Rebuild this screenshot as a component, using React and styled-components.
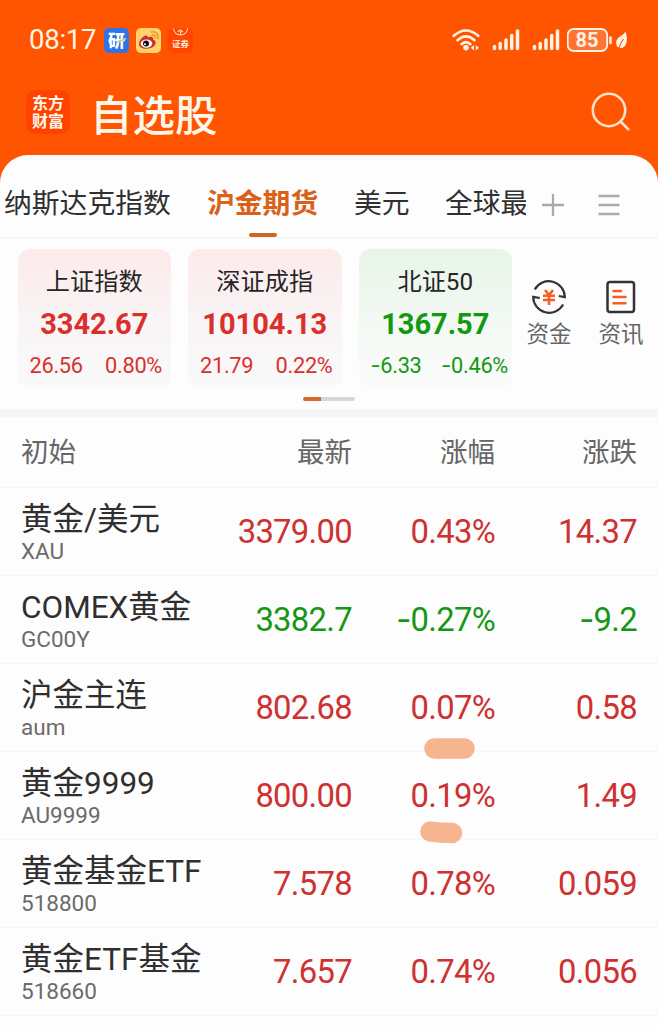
import React from "react";
import styled, { createGlobalStyle } from "styled-components";

const Global = createGlobalStyle`
  * { box-sizing: border-box; }
  body { margin: 0; background: #fdfdfd; font-family: Roboto, "Noto Sans CJK SC", sans-serif; color: #2f2f2f; }
`;

const Screen = styled.main`
  width: 658px;
  height: 1026px;
  overflow: hidden;
  background: #ff5500;
`;

const StatusBar = styled.div`
  height: 80px;
  padding: 0 29px;
  display: flex;
  align-items: center;
  justify-content: space-between;
  color: #fff3e6;
`;

const StatusGroup = styled.div`
  display: flex;
  align-items: center;
  gap: ${(p) => p.$gap}px;
`;

const Clock = styled.span`
  width: 67px;
  margin-right: 1px;
  font-size: 27.6px;
  letter-spacing: -0.3px;
  line-height: 38px;
  white-space: nowrap;
`;

const TitleBar = styled.header`
  height: 75px;
  padding: 0 27px 0 26px;
  display: flex;
  align-items: center;
  color: #fff6ea;
`;

const BrandLogo = styled.div`
  width: 44px;
  height: 44px;
  margin-top: -11px;
  padding-top: 2px;
  border-radius: 10px;
  background: #ff4200;
  display: grid;
  place-content: center;
  text-align: center;
  font-size: 16px;
  font-weight: 700;
  line-height: 18px;
`;

const Title = styled.h1`
  flex: 1;
  margin: -2px 0 0 20px;
  font-size: 42.5px;
  font-weight: 500;
  line-height: 60px;
`;

const Sheet = styled.section`
  height: 871px;
  border-radius: 28px 28px 0 0;
  background: #fdfdfd;
  overflow: hidden;
`;

const Tabs = styled.nav`
  height: 83px;
  padding: 0 4px;
  display: flex;
  border-bottom: 1px solid #f2f2f2;
`;

const Tab = styled.div`
  flex: none;
  width: ${(p) => p.$width}px;
  margin-right: ${(p) => p.$gap}px;
  padding-top: 28px;
  display: flex;
  flex-direction: column;
  align-items: center;
  justify-content: space-between;
  font-size: 27.8px;
  line-height: 42px;
  white-space: nowrap;
  overflow: hidden;
  font-weight: ${(p) => (p.$active ? 700 : 400)};
  color: ${(p) => (p.$active ? "#d9611a" : "#303030")};
  &::after {
    content: "";
    width: 28px;
    height: 4px;
    border-radius: 2px;
    background: ${(p) => (p.$active ? "#cf6526" : "transparent")};
  }
`;

const TabLabel = styled.span`
  width: 100%;
`;

const TabTools = styled.div`
  display: flex;
  gap: 32px;
  padding: 38px 0 0 0;
`;

const Overview = styled.div`
  height: 171px;
  padding: 11px 0 0 17.5px;
`;

const OverviewRow = styled.div`
  display: flex;
`;

const IndexCard = styled.div`
  width: 153.5px;
  height: 139px;
  margin-right: 17px;
  padding-top: 15px;
  border-radius: 12px;
  text-align: center;
  color: ${(p) => (p.$down ? "#119911" : "#d9302c")};
  background: ${(p) =>
    p.$down
      ? "linear-gradient(#e7f5e8, #f4f9f4 55%, #fafbfa)"
      : "linear-gradient(#fdeaea, #f9f5f6 55%, #f9f9fa)"};
`;

const IndexName = styled.div`
  color: #262626;
  font-size: 24.2px;
  line-height: 36px;
`;

const IndexValue = styled.div`
  margin-top: 4px;
  font-size: 29px;
  font-weight: 700;
  line-height: 40px;
`;

const IndexChange = styled.div`
  margin-top: 6px;
  padding-left: 12px;
  padding-right: ${(p) => (p.$down ? 4 : 9)}px;
  display: flex;
  justify-content: space-between;
  font-size: 21.8px;
  letter-spacing: -0.3px;
  line-height: 32px;
  white-space: nowrap;
`;

const Shortcut = styled.div`
  width: 46px;
  margin: 30px 26px 0 -3px;
  display: flex;
  flex-direction: column;
  align-items: center;
  gap: 3px;
  flex: none;
  font-size: 22.5px;
  line-height: 32px;
  color: #666;
  & + & { margin-left: 0; margin-right: 0; }
`;

const Pager = styled.div`
  width: 52px;
  height: 4px;
  margin: 9px 0 0 285.5px;
  border-radius: 2px;
  background: linear-gradient(to right, #d26a2c 18px, #d5d7da 18px);
`;

const Divider = styled.div`
  height: 8px;
  background: #f4f6f8;
`;

const Row = styled.div`
  height: ${(p) => (p.$head ? 71 : 88)}px;
  padding: 0 21px;
  display: grid;
  grid-template-columns: 190px 141px 143px 142px;
  align-items: center;
  border-bottom: 1px solid #f6f6f6;
`;

const HeadCell = styled.div`
  padding-top: 2px;
  text-align: ${(p) => (p.$right ? "right" : "left")};
  font-size: 27.5px;
  line-height: 40px;
  color: #666;
`;

const StockName = styled.div`
  font-size: 31.5px;
  line-height: 38px;
  white-space: nowrap;
`;

const StockCode = styled.div`
  font-size: 22.5px;
  line-height: 24px;
  color: #6b6b6b;
`;

const Figure = styled.div`
  position: relative;
  text-align: right;
  font-size: 32.8px;
  letter-spacing: -0.7px;
  line-height: 44px;
  white-space: nowrap;
  color: ${(p) => (p.$down ? "#169616" : "#cf3030")};
`;

const Minus = styled.span`
  font-family: Inter, sans-serif;
  line-height: 0;
`;

const Highlight = styled.svg`
  position: absolute;
  left: ${(p) => p.$x}px;
  top: ${(p) => p.$y}px;
`;

const BatterySvg = styled.svg`
  margin-left: -4.5px;
`;

const SearchSvg = styled.svg`
  margin-bottom: 12px;
`;

function Signed({ value }) {
  return value.startsWith("-") ? (
    <span><Minus>-</Minus>{value.slice(1)}</span>
  ) : (
    <span>{value}</span>
  );
}

const TABS = [
  { label: "纳斯达克指数", width: 167, gap: 36 },
  { label: "沪金期货", width: 111, gap: 36, active: true },
  { label: "美元", width: 56, gap: 35 },
  { label: "全球最", width: 81, gap: 15 },
];

const INDEXES = [
  { name: "上证指数", value: "3342.67", change: "26.56", pct: "0.80%" },
  { name: "深证成指", value: "10104.13", change: "21.79", pct: "0.22%" },
  { name: "北证50", value: "1367.57", change: "-6.33", pct: "-0.46%", down: true },
];

const STOCKS = [
  { name: "黄金/美元", code: "XAU", last: "3379.00", pct: "0.43%", diff: "14.37" },
  { name: "COMEX黄金", code: "GC00Y", last: "3382.7", pct: "-0.27%", diff: "-9.2", down: true },
  { name: "沪金主连", code: "aum", last: "802.68", pct: "0.07%", diff: "0.58", mark: "flat" },
  { name: "黄金9999", code: "AU9999", last: "800.00", pct: "0.19%", diff: "1.49", mark: "bent" },
  { name: "黄金基金ETF", code: "518800", last: "7.578", pct: "0.78%", diff: "0.059" },
  { name: "黄金ETF基金", code: "518660", last: "7.657", pct: "0.74%", diff: "0.056" },
];

const MARKS = {
  flat: { x: 72, y: 52, d: "M10.5 10.5H40.5" },
  bent: { x: 68, y: 47, d: "M10.5 10.5Q20 12 32 12" },
};

function ResearchIcon() {
  return (
    <svg width="25" height="25" viewBox="0 0 25 25">
      <rect width="25" height="25" rx="5" fill="#2f73e8" />
      <text x="12.5" y="18.5" textAnchor="middle" fontSize="17" fontWeight="900" fill="#fff">研</text>
      <path d="M13 14L22 10.5" stroke="#d9c77a" strokeWidth="1.6" />
    </svg>
  );
}

function WeiboIcon() {
  return (
    <svg width="25" height="25" viewBox="0 0 25 25">
      <rect width="25" height="25" rx="5" fill="#ffd36b" />
      <path d="M3 16C3 12 8 6.500 11 7.500C12 8 11.500 9 11.500 9.500C15 8 18 8.500 17 11.500C20 12.500 20.500 15 18.500 17.500C15 22 3 22 3 16Z" fill="#d52b2a" />
      <ellipse cx="10.500" cy="15.600" rx="5.800" ry="4.200" fill="#fff" />
      <circle cx="10" cy="15.600" r="3" fill="#111" />
      <circle cx="9" cy="16.200" r="1" fill="#fff" />
      <path d="M15.500 4C20 3 23 6.500 21.800 10.500M16 7C18.500 6.500 19.800 8 19.200 10" fill="none" stroke="#f39a25" strokeWidth="1.600" strokeLinecap="round" />
    </svg>
  );
}

function BrokerIcon() {
  return (
    <svg width="25" height="25" viewBox="0 0 25 25">
      <rect width="25" height="25" rx="5" fill="#ff4500" />
      <path d="M5.500 0.500C6 9 19 9 19.500 0.500M9.500 3.500L12.500 2L15 4M12.500 3V6" fill="none" stroke="#ffd9c4" strokeWidth="1.200" />
      <text x="12.500" y="19" textAnchor="middle" fontSize="8.500" fontWeight="700" fill="#ffe9da">证券</text>
    </svg>
  );
}

function WifiIcon() {
  return (
    <svg width="28" height="22" viewBox="0 0 28 22">
      <g fill="none" stroke="currentColor" strokeWidth="2.600" strokeLinecap="round">
        <path d="M1.800 6.800Q14 -3.800 26.200 6.800" />
        <path d="M5.500 11.200Q14 3.500 22.500 11.200" />
        <path d="M9.500 15.200Q14 11 18.500 15.200" />
      </g>
      <circle cx="14" cy="18.600" r="2.800" fill="currentColor" />
      <path d="M22 16V21.500L18.800 18.800ZM23.800 16V21.500L27 18.800Z" fill="currentColor" />
    </svg>
  );
}

function SignalIcon() {
  return (
    <svg width="28" height="22" viewBox="0 0 28 22">
      <path d="M2.500 17.500V19.500M8.200 14.500V19.500M14 11V19.500M19.700 6.500V19.500M25.500 2V19.500" stroke="currentColor" strokeWidth="3.500" strokeLinecap="round" />
    </svg>
  );
}

function BatteryIcon() {
  return (
    <BatterySvg width="62" height="26" viewBox="0 0 62 26">
      <rect x="0.700" y="2" width="39.500" height="22" rx="6" fill="#ff7433" stroke="currentColor" strokeWidth="1.800" />
      <text x="20" y="20" textAnchor="middle" fontFamily="Roboto" fontSize="20" fontWeight="700" fill="currentColor">85</text>
      <path d="M43.500 10.500V16" stroke="currentColor" strokeWidth="2.600" strokeLinecap="round" />
      <path d="M58.500 4.500C61 12 60 18.500 56 20.500C51.500 22.500 48 18.500 49.500 13.500C51 9.500 56 9 58.500 4.500Z" fill="currentColor" />
      <path d="M52 21.500C53 17 54.500 14.500 56.500 12" stroke="#ff5500" strokeWidth="1.200" fill="none" />
    </BatterySvg>
  );
}

function SearchIcon() {
  return (
    <SearchSvg width="40" height="40" viewBox="0 0 40 40">
      <g fill="none" stroke="#ffe3cb" strokeWidth="2.600">
        <circle cx="18" cy="18" r="16.200" />
        <path d="M29.500 29.500L38 38" />
      </g>
    </SearchSvg>
  );
}

function FundsIcon() {
  return (
    <svg width="36" height="36" viewBox="0 0 36 36">
      <g fill="none" stroke="#333" strokeWidth="2.200">
        <path d="M3.800 10.500A16 16 0 0 1 33.800 18.200L27.800 17" />
        <path d="M32.200 25.500A16 16 0 0 1 2.200 17.800L8.800 19" />
      </g>
      <path d="M14 11L18 16L22 11M12 16.800H24M12 21H24M18 16V26" fill="none" stroke="#f4601f" strokeWidth="2.600" />
    </svg>
  );
}

function NewsIcon() {
  return (
    <svg width="36" height="36" viewBox="0 0 36 36">
      <rect x="4.500" y="3" width="26.500" height="30" rx="2.500" fill="none" stroke="#333" strokeWidth="2.500" />
      <path d="M10.500 12H18M10.500 18H22.500M10.500 24.200H22.500" stroke="#f4601f" strokeWidth="2.500" strokeLinecap="round" />
    </svg>
  );
}

export default function App() {
  return (
    <Screen>
      <Global />
      <StatusBar>
        <StatusGroup $gap={7}>
          <Clock>08:17</Clock>
          <ResearchIcon />
          <WeiboIcon />
          <BrokerIcon />
        </StatusGroup>
        <StatusGroup $gap={12}>
          <WifiIcon />
          <SignalIcon />
          <SignalIcon />
          <BatteryIcon />
        </StatusGroup>
      </StatusBar>
      <TitleBar>
        <BrandLogo>东方<br />财富</BrandLogo>
        <Title>自选股</Title>
        <SearchIcon />
      </TitleBar>
      <Sheet>
        <Tabs>
          {TABS.map((t) => (
            <Tab key={t.label} $width={t.width} $gap={t.gap} $active={t.active}>
              <TabLabel>{t.label}</TabLabel>
            </Tab>
          ))}
          <TabTools>
            <svg width="24" height="24" viewBox="0 0 24 24">
              <path d="M1 12H23M12 1V23" stroke="#aaa" strokeWidth="2.300" />
            </svg>
            <svg width="24" height="24" viewBox="0 0 24 24">
              <path d="M1.500 3H22.500M1.500 12H22.500M1.500 21H22.500" stroke="#aaa" strokeWidth="2.300" />
            </svg>
          </TabTools>
        </Tabs>
        <Overview>
          <OverviewRow>
            {INDEXES.map((i) => (
              <IndexCard key={i.name} $down={i.down}>
                <IndexName>{i.name}</IndexName>
                <IndexValue>{i.value}</IndexValue>
                <IndexChange $down={i.down}>
                  <Signed value={i.change} />
                  <Signed value={i.pct} />
                </IndexChange>
              </IndexCard>
            ))}
            <Shortcut><FundsIcon />资金</Shortcut>
            <Shortcut><NewsIcon />资讯</Shortcut>
          </OverviewRow>
          <Pager />
        </Overview>
        <Divider />
        <Row $head>
          <HeadCell>初始</HeadCell>
          <HeadCell $right>最新</HeadCell>
          <HeadCell $right>涨幅</HeadCell>
          <HeadCell $right>涨跌</HeadCell>
        </Row>
        {STOCKS.map((s) => (
          <Row key={s.code}>
            <div>
              <StockName>{s.name}</StockName>
              <StockCode>{s.code}</StockCode>
            </div>
            <Figure $down={s.down}>{s.last}</Figure>
            <Figure $down={s.down}>
              <Signed value={s.pct} />
              {s.mark && (
                <Highlight $x={MARKS[s.mark].x} $y={MARKS[s.mark].y} width="52" height="24">
                  <path d={MARKS[s.mark].d} fill="none" stroke="#f6b48f" strokeWidth="20.500" strokeLinecap="round" />
                </Highlight>
              )}
            </Figure>
            <Figure $down={s.down}><Signed value={s.diff} /></Figure>
          </Row>
        ))}
      </Sheet>
    </Screen>
  );
}
